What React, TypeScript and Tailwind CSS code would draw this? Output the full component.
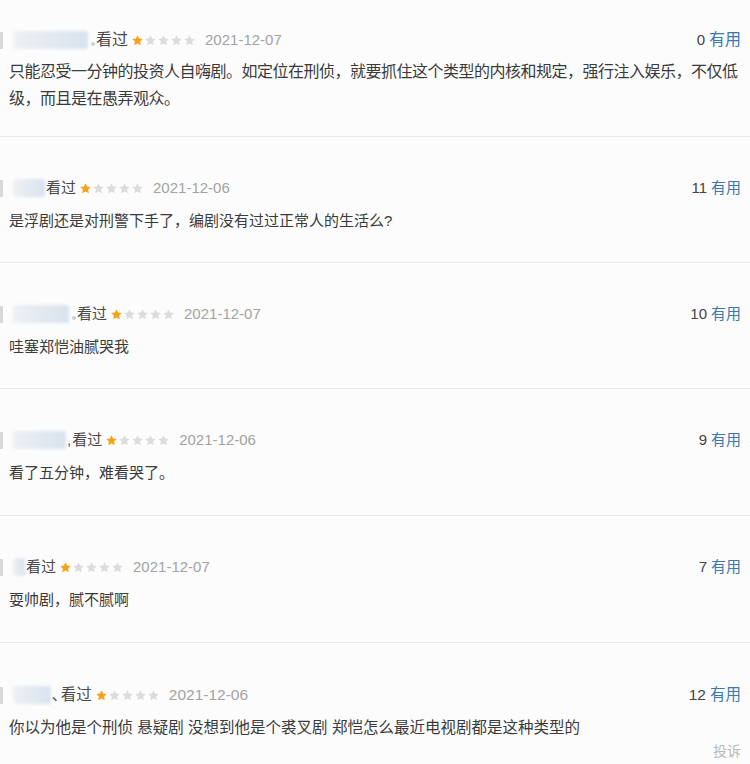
import React from "react";

const FONT = '"Liberation Sans", "Noto Sans CJK SC", Arial, sans-serif';

function Star({ on }: { on: boolean }) {
  return (
    <svg width="13" height="13" viewBox="0 0 24 24" className="shrink-0">
      <path
        d="M12 2.2l2.95 6.3 6.85.8-5.05 4.7 1.35 6.8L12 17.4l-6.1 3.4 1.35-6.8L2.2 9.3l6.85-.8z"
        fill={on ? "#f5a31a" : "#dcdcdc"}
      />
    </svg>
  );
}

type Entry = {
  blurW: number;
  sep: string;
  date: string;
  count: string;
  lines: string[];
  h: string;
  pt: string;
  fs: string;
  dfs: string;
  lh: string;
  gap: string;
  track: string;
  dot?: boolean;
};

const entries: Entry[] = [
  {
    blurW: 75,
    sep: "",
    date: "2021-12-07",
    count: "0",
    lines: [
      "只能忍受一分钟的投资人自嗨剧。如定位在刑侦，就要抓住这个类型的内核和规定，强行注入娱乐，不仅低",
      "级，而且是在愚弄观众。",
    ],
    h: "h-[137px]",
    pt: "pt-[30px]",
    fs: "text-[16px]",
    dfs: "text-[15px]",
    lh: "leading-[27px]",
    gap: "mt-[8px]",
    track: "tracking-[-0.5px]",
    dot: true,
  },
  {
    blurW: 32,
    sep: "",
    date: "2021-12-06",
    count: "11",
    lines: ["是浮剧还是对刑警下手了，编剧没有过过正常人的生活么?"],
    h: "h-[126px]",
    pt: "pt-[41px]",
    fs: "text-[15px]",
    dfs: "text-[15px]",
    lh: "leading-[20px]",
    gap: "mt-[13px]",
    track: "",
  },
  {
    blurW: 56,
    sep: "",
    date: "2021-12-07",
    count: "10",
    lines: ["哇塞郑恺油腻哭我"],
    h: "h-[126px]",
    pt: "pt-[41px]",
    fs: "text-[15px]",
    dfs: "text-[15px]",
    lh: "leading-[20px]",
    gap: "mt-[13px]",
    track: "",
    dot: true,
  },
  {
    blurW: 53,
    sep: ",",
    date: "2021-12-06",
    count: "9",
    lines: ["看了五分钟，难看哭了。"],
    h: "h-[127px]",
    pt: "pt-[41px]",
    fs: "text-[15px]",
    dfs: "text-[15px]",
    lh: "leading-[20px]",
    gap: "mt-[13px]",
    track: "",
  },
  {
    blurW: 12,
    sep: "",
    date: "2021-12-07",
    count: "7",
    lines: ["耍帅剧，腻不腻啊"],
    h: "h-[127px]",
    pt: "pt-[41px]",
    fs: "text-[15px]",
    dfs: "text-[15px]",
    lh: "leading-[20px]",
    gap: "mt-[13px]",
    track: "",
  },
  {
    blurW: 38,
    sep: "､",
    date: "2021-12-06",
    count: "12",
    lines: ["你以为他是个刑侦 悬疑剧 没想到他是个裘叉剧 郑恺怎么最近电视剧都是这种类型的"],
    h: "h-[121px]",
    pt: "pt-[42px]",
    fs: "text-[15.5px]",
    dfs: "text-[15.5px]",
    lh: "leading-[20px]",
    gap: "mt-[13px]",
    track: "",
  },
];

function Row({ e, last }: { e: Entry; last: boolean }) {
  return (
    <div
      className={`${e.h} ${e.pt} pr-[9px] ${last ? "" : "border-b border-[#e9e9e9]"} box-border`}
    >
      <div className="flex items-center h-[20px]">
        <div className="flex items-center h-[20px]">
          <div className="w-[3px] h-[17px] bg-[#cfcfcf] opacity-80" />
          <div
            className="h-[18px] ml-[10px] rounded-[3px] bg-gradient-to-r from-[#eef1f5] via-[#e3e9f0] to-[#d8e3ee] blur-[1.5px]"
            style={{ width: e.blurW }}
          />
          {e.dot ? <div className="w-[4px] h-[4px] ml-[3px] mt-[8px] bg-[#c9cfd6] rounded-sm" /> : null}
        </div>
        {e.sep ? <span className={`text-[#555] ${e.fs} ml-[1px]`}>{e.sep}</span> : null}
        <span className={`text-[#4a4a4a] ${e.fs} ml-[1px]`}>看过</span>
        <div className="flex items-center ml-[3px]">
          <Star on={true} />
          <Star on={false} />
          <Star on={false} />
          <Star on={false} />
          <Star on={false} />
        </div>
        <span className={`text-[#a3a3a3] ${e.dfs} ml-[9px]`}>{e.date}</span>
        <div className="ml-auto flex items-center">
          <span className={`text-[#444] ${e.dfs}`}>{e.count}</span>
          <span className={`text-[#3b77b0] ${e.fs} ml-[4px]`}>有用</span>
        </div>
      </div>
      <div className={`${e.gap} pl-[9px] text-[#3a3a3a] ${e.fs} ${e.lh} ${e.track} whitespace-pre`}>
        {e.lines.map((l, i) => (
          <div key={i}>{l}</div>
        ))}
      </div>
      {last ? (
        <div className="flex justify-end mt-[3px] leading-[20px]">
          <span className="text-[14px] text-[#b9b9b9]">投诉</span>
        </div>
      ) : null}
    </div>
  );
}

export default function App() {
  return (
    <div
      className="w-[750px] h-[764px] overflow-hidden bg-[#fcfcfc]"
      style={{ fontFamily: FONT }}
    >
      {entries.map((e, i) => (
        <Row key={i} e={e} last={i === entries.length - 1} />
      ))}
    </div>
  );
}
